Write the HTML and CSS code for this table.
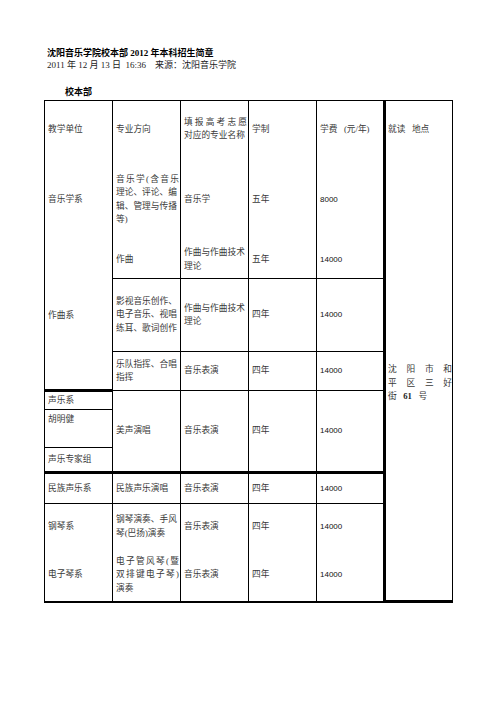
FILE: index.html
```html
<!DOCTYPE html>
<html>
<head>
<meta charset="utf-8">
<link rel="stylesheet" href="styles.css">
</head>
<body>
<div class="page">
  <div class="head">
    <div class="title">沈阳音乐学院校本部 2012 年本科招生简章</div>
    <div class="meta">2011 年 12 月 13 日&nbsp; 16:36&nbsp;&nbsp;&nbsp; 来源：沈阳音乐学院</div>
    <div class="sub">校本部</div>
  </div>
  <table class="grid">
    <colgroup>
      <col class="cw"><col class="cw"><col class="cw"><col class="cw"><col class="cw"><col class="cw">
    </colgroup>
    <tr class="r1 top">
      <td>教学单位</td>
      <td>专业方向</td>
      <td><span class="ln j">填报高考志愿</span><span class="ln">对应的专业名称</span></td>
      <td>学制</td>
      <td>学费&nbsp;&nbsp; (元/年)</td>
      <td class="c7">就读&nbsp;&nbsp; 地点</td>
    </tr>
    <tr class="r2">
      <td>音乐学系</td>
      <td><span class="ln j">音乐学(含音乐</span><span class="ln">理论、评论、编</span><span class="ln">辑、管理与传播</span><span class="ln">等)</span></td>
      <td>音乐学</td>
      <td>五年</td>
      <td class="num">8000</td>
      <td class="c7 addr" rowspan="10"><span class="ln j">沈阳市和</span><span class="ln j">平区三好</span><span class="ln">街&nbsp;&nbsp;&nbsp;<span class="nb">61</span>&nbsp;&nbsp; 号</span></td>
    </tr>
    <tr class="r3">
      <td class="bb3" rowspan="3">作曲系</td>
      <td class="bb">作曲</td>
      <td class="bb"><span class="ln">作曲与作曲技术</span><span class="ln">理论</span></td>
      <td class="bb">五年</td>
      <td class="bb num">14000</td>
    </tr>
    <tr class="r4">
      <td class="bb"><span class="ln">影视音乐创作、</span><span class="ln">电子音乐、视唱</span><span class="ln">练耳、歌词创作</span></td>
      <td class="bb"><span class="ln">作曲与作曲技术</span><span class="ln">理论</span></td>
      <td class="bb">四年</td>
      <td class="bb num">14000</td>
    </tr>
    <tr class="r5">
      <td class="bb"><span class="ln">乐队指挥、合唱</span><span class="ln">指挥</span></td>
      <td class="bb">音乐表演</td>
      <td class="bb">四年</td>
      <td class="bb num">14000</td>
    </tr>
    <tr class="r6">
      <td class="bb">声乐系</td>
      <td class="bb3" rowspan="3">美声演唱</td>
      <td class="bb3" rowspan="3">音乐表演</td>
      <td class="bb3" rowspan="3">四年</td>
      <td class="bb3 num" rowspan="3">14000</td>
    </tr>
    <tr class="r7">
      <td class="bb top-al">胡明健</td>
    </tr>
    <tr class="r8">
      <td class="bb3">声乐专家组</td>
    </tr>
    <tr class="r9">
      <td class="bb">民族声乐系</td>
      <td class="bb">民族声乐演唱</td>
      <td class="bb">音乐表演</td>
      <td class="bb">四年</td>
      <td class="bb num">14000</td>
    </tr>
    <tr class="r10">
      <td>钢琴系</td>
      <td><span class="ln">钢琴演奏、手风</span><span class="ln">琴(巴扬)演奏</span></td>
      <td>音乐表演</td>
      <td>四年</td>
      <td class="num">14000</td>
    </tr>
    <tr class="r11 last">
      <td>电子琴系</td>
      <td><span class="ln j">电子管风琴(暨</span><span class="ln j">双排键电子琴)</span><span class="ln">演奏</span></td>
      <td>音乐表演</td>
      <td>四年</td>
      <td class="num">14000</td>
    </tr>
  </table>
</div>
</body>
</html>
```
FILE: styles.css
```css
html, body {
  margin: 0;
  padding: 0;
  background: #fff;
}
.page {
  font-family: "Liberation Serif", "Noto Sans CJK SC", serif;
  color: #000;
}
.head {
  padding: 47px 0 0 47px;
}
.title {
  font-size: 9px;
  line-height: 12px;
  font-weight: bold;
}
.meta {
  font-size: 9px;
  line-height: 12px;
  color: #222;
}
.sub {
  font-size: 9px;
  line-height: 12px;
  font-weight: bold;
  margin: 15px 0 0 18px;
}
.grid {
  margin: 2px 0 0 44px;
  border-collapse: collapse;
  table-layout: fixed;
  width: 408px;
}
.cw {
  width: 68px;
}
.grid td {
  border-left: 1px solid #000;
  border-right: 1px solid #000;
  border-top: none;
  border-bottom: none;
  padding: 0 1px 0 3px;
  vertical-align: middle;
  font-size: 8.7px;
  line-height: 13.5px;
  color: #3a3a3a;
}
.grid .top td {
  border-top: 1px solid #000;
}
.grid td.bb {
  border-bottom: 1px solid #000;
}
.grid td.bb3 {
  border-bottom: 3px solid #000;
}
.grid .last td {
  border-bottom: 2px solid #000;
}
.grid td.c7 {
  border-left: 3px solid #000;
  border-right: 1px solid #000;
  padding: 0 0 0 2px;
}
.grid td.addr {
  border-bottom: 3px solid #000;
  padding-top: 9px;
}
.grid td.top-al {
  vertical-align: top;
  padding-top: 3px;
}
.grid td.num {
  font-family: "Liberation Sans", sans-serif;
  font-size: 8px;
  color: #111;
}
.nb {
  font-family: "Liberation Serif", serif;
  font-weight: bold;
  color: #222;
}
.ln {
  display: block;
}
.ln.j {
  text-align: justify;
  text-align-last: justify;
}
.r1 { height: 57px; }
.r2 { height: 84px; }
.r3 { height: 37px; }
.r4 { height: 73px; }
.r5 { height: 39px; }
.r6 { height: 19px; }
.r7 { height: 38px; }
.r8 { height: 25px; }
.r9 { height: 31px; }
.r10 { height: 46px; }
.r11 { height: 52px; }
```
